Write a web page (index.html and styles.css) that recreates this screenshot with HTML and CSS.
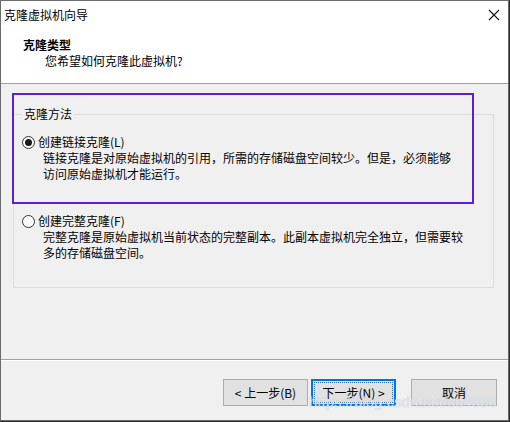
FILE: index.html
```html
<!DOCTYPE html>
<html lang="zh-CN">
<head>
<meta charset="utf-8">
<link rel="stylesheet" href="styles.css">
</head>
<body>
<div class="window">
  <div class="titlebar">
    <span class="title">克隆虚拟机向导</span>
    <svg class="close" width="12" height="12" viewBox="0 0 12 12"><path d="M1 1 L11 11 M11 1 L1 11" stroke="#111" stroke-width="1.1" fill="none"/></svg>
  </div>
  <div class="header">
    <div class="h-title">克隆类型</div>
    <div class="h-sub">您希望如何克隆此虚拟机?</div>
  </div>
  <div class="main">
    <fieldset class="group">
      <legend>克隆方法</legend>
      <div class="option">
        <div class="radio-row"><span class="radio checked"></span><span>创建链接克隆(L)</span></div>
        <div class="desc"><div>链接克隆是对原始虚拟机的引用，所需的存储磁盘空间较少。但是，必须能够</div><div>访问原始虚拟机才能运行。</div></div>
      </div>
      <div class="option second">
        <div class="radio-row"><span class="radio"></span><span>创建完整克隆(F)</span></div>
        <div class="desc"><div>完整克隆是原始虚拟机当前状态的完整副本。此副本虚拟机完全独立，但需要较</div><div>多的存储磁盘空间。</div></div>
      </div>
    </fieldset>
    <div class="highlight"></div>
  </div>
  <div class="footer">
    <button class="btn">&lt; 上一步(B)</button>
    <button class="btn primary">下一步(N) &gt;</button>
    <button class="btn cancel">取消</button>
    <div class="watermark">https://blog.csdn.net/cd4836</div>
  </div>
</div>
</body>
</html>
```

FILE: styles.css
```css
* { box-sizing: border-box; }
html, body { margin: 0; padding: 0; }
body {
  width: 510px;
  height: 422px;
  background: #2b2b2b;
  font-family: "Noto Sans CJK SC", "Microsoft YaHei", sans-serif;
  font-size: 12px;
  line-height: 16px;
  color: #000;
  overflow: hidden;
}
.window {
  width: 509px;
  height: 421px;
  background: #f0f0f0;
  border: 1px solid #6b6b6b;
  position: relative;
  display: flex;
  flex-direction: column;
}
.titlebar {
  height: 29px;
  background: #fff;
  display: flex;
  align-items: center;
  justify-content: space-between;
  padding: 0 8px 2px 3px;
}
.close { display: block; }
.header {
  height: 54px;
  background: #fff;
  border-bottom: 1px solid #a0a0a0;
  padding-top: 7px;
}
.h-title { font-weight: bold; padding-left: 22px; }
.h-sub { padding-left: 44px; }
.main {
  height: 276px;
  position: relative;
  padding: 22px 13px 0 12px;
  border-bottom: 1px solid #a0a0a0;
}
.group {
  margin: 0;
  width: 481px;
  height: 182px;
  border: 1px solid #dcdcdc;
  padding: 12px 8px 0 8px;
}
.group legend {
  padding: 0 2px;
  margin-left: 0;
  line-height: 16px;
}
.radio-row {
  display: flex;
  align-items: center;
  gap: 3px;
  height: 16px;
}
.radio {
  width: 13px;
  height: 13px;
  border: 1px solid #333;
  border-radius: 50%;
  background: #fff;
  display: flex;
  align-items: center;
  justify-content: center;
}
.radio.checked::after {
  content: "";
  width: 7px;
  height: 7px;
  border-radius: 50%;
  background: #1a1a1a;
}
.desc { padding-left: 21px; white-space: nowrap; }
.option.second { margin-top: 31px; }
.highlight {
  position: absolute;
  left: 11px;
  top: 9px;
  width: 462px;
  height: 111px;
  border: 2px solid #5b1fd6;
}
.footer {
  flex: 1;
  border-top: 1px solid #fff;
  display: flex;
  align-items: flex-start;
  justify-content: flex-end;
  padding: 18px 11px 0 0;
  position: relative;
}
.btn {
  width: 85px;
  height: 27px;
  background: #e1e1e1;
  border: 1px solid #adadad;
  font-family: inherit;
  font-size: 12px;
  color: #000;
  padding: 0;
  margin: 0;
}
.btn.primary {
  margin-left: 3px;
  border: 2px solid #0078d7;
  outline: 1px dotted #3d6fa8;
  outline-offset: -4px;
}
.btn.cancel {
  margin-left: 15px;
  width: 86px;
}
.watermark {
  position: absolute;
  left: 308px;
  top: 33px;
  font-family: "Liberation Sans", Arial, sans-serif;
  font-size: 15px;
  line-height: 16px;
  color: rgba(235, 240, 248, 0.8);
  text-shadow: 0 0 1px rgba(150, 160, 180, 0.6);
  pointer-events: none;
  white-space: nowrap;
}
```
